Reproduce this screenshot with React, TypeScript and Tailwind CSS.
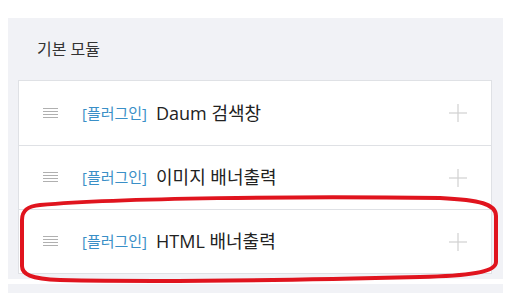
import React from "react";

const modules = [
  { id: 1, name: "Daum 검색창" },
  { id: 2, name: "이미지 배너출력" },
  { id: 3, name: "HTML 배너출력" },
];

function DragHandle() {
  return (
    <svg width="15" height="11" viewBox="0 0 15 11" className="shrink-0">
      {[0.5, 3.5, 6.5, 9.5].map((y) => (
        <line key={y} x1="0" y1={y} x2="15" y2={y} stroke="#b0b0b0" strokeWidth="1" />
      ))}
    </svg>
  );
}

function PlusIcon() {
  return (
    <svg width="18" height="18" viewBox="0 0 18 18" className="shrink-0">
      <line x1="9" y1="0" x2="9" y2="18" stroke="#d0d0d0" strokeWidth="1.2" />
      <line x1="0" y1="9" x2="18" y2="9" stroke="#d0d0d0" strokeWidth="1.2" />
    </svg>
  );
}

export default function App() {
  return (
    <div
      className="relative w-[518px] h-[293px] bg-white overflow-hidden"
      style={{ fontFamily: '"Open Sans", "Noto Sans CJK KR", sans-serif' }}
    >
      <div className="ml-2 mt-[18px] w-[495px] bg-[#f1f2f6] pl-[10px] pr-[11px] pb-[5px]">
        <div className="h-[62px] flex items-center pl-[19px] text-[16px] text-[#333]">기본 모듈</div>
        <ul className="bg-white border border-[#dfe1e5]">
          {modules.map((m, i) => (
            <li
              key={m.id}
              className={`h-[64px] flex items-center pl-[24px] pr-[24px] ${
                i > 0 ? "border-t border-[#dfe1e5]" : ""
              }`}
            >
              <DragHandle />
              <span className="ml-[24px] text-[15px] text-[#3a8fc7]">[플러그인]</span>
              <span className="ml-[9px] text-[18px] text-[#222] flex-1">{m.name}</span>
              <PlusIcon />
            </li>
          ))}
        </ul>
      </div>
      <div className="ml-2 mt-[5px] w-[495px] h-[20px] bg-[#f1f2f6]" />

      {/* red hand-drawn highlight */}
      <svg className="absolute left-0 top-0 pointer-events-none" width="518" height="293">
        <path
          d="M40 205 C 120 198, 300 196, 440 198 C 480 200, 496 204, 496 216 L 496 262 C 496 272, 470 276, 420 277 C 300 280, 150 282, 60 280 C 30 279, 22 274, 22 266 L 22 220 C 22 210, 28 206, 40 205 Z"
          fill="none"
          stroke="#e0141e"
          strokeWidth="4"
        />
      </svg>
    </div>
  );
}
